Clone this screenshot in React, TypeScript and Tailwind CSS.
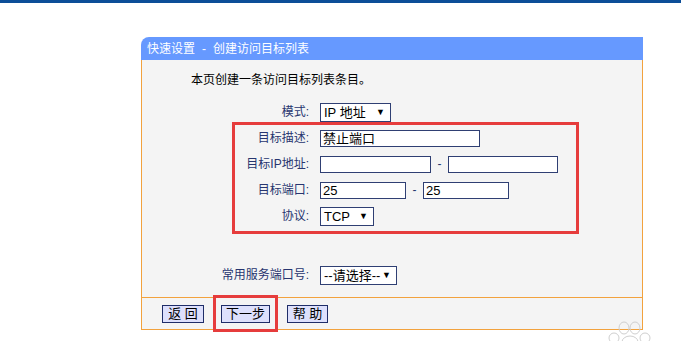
import type { ReactNode } from 'react';

const FONT = "font-['Liberation_Sans','Noto_Sans_CJK_SC',sans-serif]";

function Row({ label, children }: { label: string; children: ReactNode }) {
  return (
    <div className="flex h-[26px] items-center">
      <div className="w-[167px] shrink-0 text-right text-[12px] leading-none text-[#27356f]">{label}</div>
      <div className="ml-[11px] flex items-center">{children}</div>
    </div>
  );
}

function Input({ w, value = '' }: { w: string; value?: string }) {
  return (
    <div className={`${w} flex h-[17px] items-center border border-[#2f3f73] bg-white pl-[2px] text-[13px] leading-none text-black`}>
      {value}
    </div>
  );
}

function Select({ w, value }: { w: string; value: string }) {
  return (
    <div className={`${w} flex h-[19px] items-center justify-between border border-[#2f3f73] bg-white pl-[3px] pr-[5px] text-[13px] leading-none text-black`}>
      <span>{value}</span>
      <span className="text-[9px]">▼</span>
    </div>
  );
}

function Dash() {
  return <span className="w-[17px] text-center text-[12px] leading-none text-[#27356f]">-</span>;
}

function Btn({ w, children }: { w: string; children: ReactNode }) {
  return (
    <div className={`${w} flex h-[18px] items-center justify-center border border-[#1f2d68] bg-[#dde0fc] text-[13px] leading-none text-black`}>
      {children}
    </div>
  );
}

export default function App() {
  return (
    <div className={`relative h-[341px] w-[681px] overflow-hidden bg-white ${FONT}`}>
      <div className="h-[3px] w-full bg-[#0c4e98]" />

      <div className="ml-[141px] mt-[34px] w-[502px]">
        <div className="flex h-[23px] items-center gap-[7px] rounded-tl-[8px] bg-[#6699ff] pl-[6px] text-[12px] text-white">
          <span>快速设置</span>
          <span>-</span>
          <span>创建访问目标列表</span>
        </div>

        <div className="border-x border-[#f2a23d] bg-[#f4f4f4] pb-[9px] pt-[12px]">
          <div className="pl-[49px] text-[12px] leading-[16px] text-black">本页创建一条访问目标列表条目。</div>
          <div className="mt-[11px]">
            <Row label="模式:">
              <Select w="w-[71px]" value="IP 地址" />
            </Row>
            <Row label="目标描述:">
              <Input w="w-[160px]" value="禁止端口" />
            </Row>
            <Row label="目标IP地址:">
              <Input w="w-[111px]" />
              <Dash />
              <Input w="w-[110px]" />
            </Row>
            <Row label="目标端口:">
              <Input w="w-[86px]" value="25" />
              <Dash />
              <Input w="w-[86px]" value="25" />
            </Row>
            <Row label="协议:">
              <Select w="w-[54px]" value="TCP" />
            </Row>
            <div className="mt-[33px]">
              <Row label="常用服务端口号:">
                <Select w="w-[77px]" value="--请选择--" />
              </Row>
            </div>
          </div>
        </div>

        <div className="flex h-[33px] items-center gap-[17px] border border-[#f2a23d] bg-[#f4f4f4] pl-[20px]">
          <Btn w="w-[42px]">返 回</Btn>
          <Btn w="w-[49px]">下一步</Btn>
          <Btn w="w-[41px]">帮 助</Btn>
        </div>
      </div>

      {/* annotations */}
      <div className="absolute left-[232px] top-[122px] h-[112px] w-[347px] border-[3px] border-[#e63c3c]" />
      <div className="absolute left-[213px] top-[295px] h-[37px] w-[65px] border-[3px] border-[#e63c3c]" />

      {/* watermark */}
      <svg className="absolute left-[606px] top-[320px]" width="48" height="24" viewBox="0 0 48 24" fill="none" stroke="#cfcfcf" strokeWidth="1">
        <ellipse cx="18" cy="8" rx="5" ry="6" />
        <ellipse cx="29" cy="8" rx="5" ry="6" />
        <ellipse cx="8" cy="18" rx="5" ry="5" />
        <ellipse cx="39" cy="18" rx="5" ry="5" />
        <ellipse cx="24" cy="22" rx="8" ry="6" />
      </svg>
    </div>
  );
}
